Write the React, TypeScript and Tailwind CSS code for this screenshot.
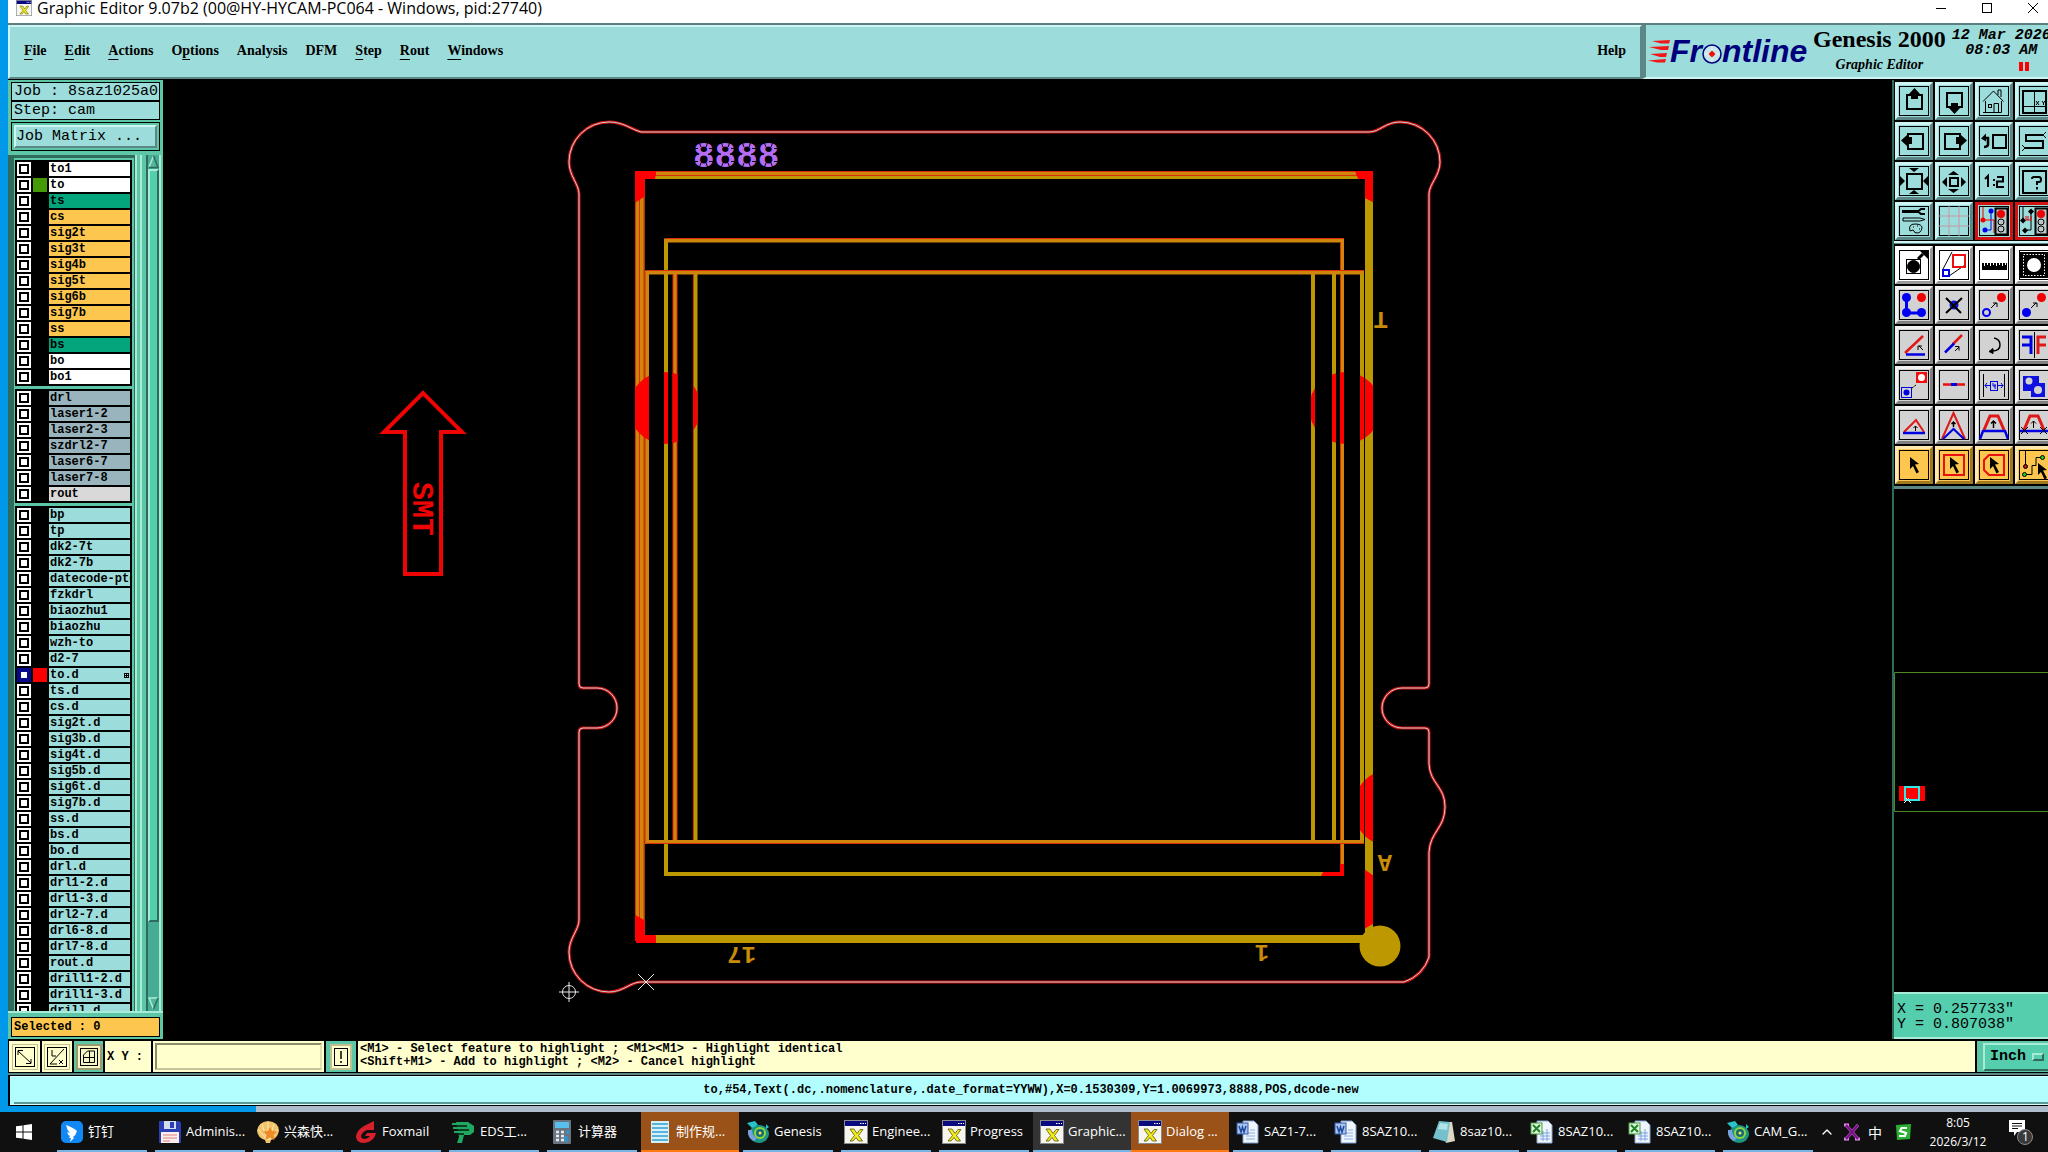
import { clsx } from "clsx";
import { ChevronUp } from "lucide-react";
import type { ReactNode } from "react";

const MENUS: { name: string; mark?: number }[] = [
  { name: "File", mark: 0 },
  { name: "Edit", mark: 0 },
  { name: "Actions", mark: 0 },
  { name: "Options", mark: 1 },
  { name: "Analysis" },
  { name: "DFM" },
  { name: "Step", mark: 0 },
  { name: "Rout", mark: 0 },
  { name: "Windows", mark: 0 },
];

type Layer = { name: string; color: string; swatch?: string; active?: boolean };

const paint = (color: string, names: string[]): Layer[] => names.map(name => ({ name, color }));

const LAYER_GROUPS: Layer[][] = [
  [
    { name: "to1", color: "bg-white" },
    { name: "to", color: "bg-white", swatch: "bg-[#459a08]" },
    { name: "ts", color: "bg-[#04a47c]" },
    ...paint("bg-[#fdc74f]", ["cs", "sig2t", "sig3t", "sig4b", "sig5t", "sig6b", "sig7b", "ss"]),
    { name: "bs", color: "bg-[#04a47c]" },
    ...paint("bg-white", ["bo", "bo1"]),
  ],
  [
    ...paint("bg-[#9ab4be]", ["drl", "laser1-2", "laser2-3", "szdrl2-7", "laser6-7", "laser7-8"]),
    { name: "rout", color: "bg-[#d9d9d9]" },
  ],
  [
    ...paint("bg-[#9cdcda]", [
      "bp",
      "tp",
      "dk2-7t",
      "dk2-7b",
      "datecode-ptd",
      "fzkdrl",
      "biaozhu1",
      "biaozhu",
      "wzh-to",
      "d2-7",
    ]),
    { name: "to.d", color: "bg-[#9cdcda]", swatch: "bg-[#ff0000]", active: true },
    ...paint("bg-[#9cdcda]", [
      "ts.d",
      "cs.d",
      "sig2t.d",
      "sig3b.d",
      "sig4t.d",
      "sig5b.d",
      "sig6t.d",
      "sig7b.d",
      "ss.d",
      "bs.d",
      "bo.d",
      "drl.d",
      "drl1-2.d",
      "drl1-3.d",
      "drl2-7.d",
      "drl6-8.d",
      "drl7-8.d",
      "rout.d",
      "drill1-2.d",
      "drill1-3.d",
      "drill.d",
    ]),
  ],
];

function XIcon({ className }: { className?: string }) {
  return (
    <svg viewBox="0 0 24 24" className={className} aria-hidden="true">
      <rect x="0.5" y="0.5" width="23" height="23" fill="#f6f6ee" stroke="#8a8a8a" />
      <rect x="1" y="1" width="22" height="5" fill="#0a0a80" />
      <path d="M16 3.500h1.500M18.500 3.500h1.500M21 3.500h1" stroke="#fff" strokeWidth="1.200" />
      <path d="M6 9h4l3 4.500 3-4h3l-4.500 6 4 5.500h-4l-2.500-3.500L9 21H6l4.500-5.500z" fill="#f4ec1a" stroke="#55550a" strokeWidth="0.800" />
    </svg>
  );
}

function TitleBar() {
  return (
    <header className="flex h-[23px] items-center bg-white pb-2 text-black">
      <XIcon className="ml-2 size-4" />
      <h1 className="ml-[5px] whitespace-nowrap font-['Open_Sans',sans-serif] text-[16px] leading-4">
        Graphic Editor 9.07b2 (00@HY-HYCAM-PC064 - Windows, pid:27740)
      </h1>
      <div className="ml-auto flex items-center gap-[34px] pr-[9px]">
        <button type="button" aria-label="Minimize">
          <svg viewBox="0 0 12 12" className="size-3" stroke="#000">
            <path d="M1 6.500h10" />
          </svg>
        </button>
        <button type="button" aria-label="Maximize">
          <svg viewBox="0 0 12 12" className="size-3" stroke="#000" fill="none">
            <rect x="1.500" y="1.500" width="9" height="9" />
          </svg>
        </button>
        <button type="button" aria-label="Close">
          <svg viewBox="0 0 12 12" className="size-3" stroke="#000">
            <path d="M1 1l10 10M11 1L1 11" />
          </svg>
        </button>
      </div>
    </header>
  );
}

function MenuName({ name, mark }: { name: string; mark?: number }) {
  if (mark === undefined) return <>{name}</>;
  return (
    <>
      {name.slice(0, mark)}
      <span className="underline underline-offset-4">{name[mark]}</span>
      {name.slice(mark + 1)}
    </>
  );
}

function FrontlineLogo() {
  return (
    <div className="flex items-center" aria-label="Frontline">
      <svg viewBox="0 0 22 26" className="h-[26px] w-[22px]" fill="#f01818" aria-hidden="true">
        <path d="M4 3l18-1-1 3.500H13zM1 9l20-1-1 4h-7zM2 16l17-1-1 4h-6zM0 22.500l18-1.500-1 3.500H9z" />
      </svg>
      <span className="flex items-center font-['Liberation_Sans',sans-serif] text-[32px] leading-8 font-bold text-[#00007c] italic">
        Fr
        <svg viewBox="0 0 20 20" className="mt-1.5 size-5" aria-hidden="true">
          <circle cx="10" cy="10" r="9" fill="#c4e8ea" stroke="#00007c" strokeWidth="1.500" />
          <path d="M10 3v14M3 10h14" stroke="#e8f4f4" />
          <path d="M10 6.500L13.500 10 10 13.500 6.500 10z" fill="#f01010" />
        </svg>
        ntline
      </span>
    </div>
  );
}

function MenuBar() {
  return (
    <div className="flex h-[57px] border-t-2 border-b border-t-[#5b7f7e] border-b-black bg-[#9cdcda] font-['Liberation_Serif',serif] text-black">
      <nav className="flex min-w-0 flex-1 items-center gap-[18px] border-2 border-t-[#cdf5f3] border-r-[#5b8886] border-b-[#5b8886] border-l-[#cdf5f3] px-3.5 pb-1 text-[14px] font-bold">
        {MENUS.map(menu => (
          <button key={menu.name} type="button">
            <MenuName {...menu} />
          </button>
        ))}
        <button type="button" className="ml-auto">
          Help
        </button>
      </nav>
      <div className="flex w-[406px] shrink-0 items-center overflow-hidden border-b-2 border-l-4 border-b-[#cdf5f3] border-l-[#5b8886] pl-0.5">
        <FrontlineLogo />
        <div className="ml-1 flex w-[136px] shrink-0 flex-col items-center">
          <div className="text-[24px] leading-7 font-bold whitespace-nowrap">Genesis 2000</div>
          <div className="text-[14px] leading-6 font-bold italic">Graphic Editor</div>
        </div>
        <div className="ml-1 w-[100px] shrink-0 text-center font-['Liberation_Mono',monospace] text-[15px] leading-[15px] font-bold whitespace-nowrap italic">
          12 Mar 2026
          <br />
          08:03 AM
          <svg viewBox="0 0 10 9" className="mt-1 mb-1 ml-[68px] h-[9px] w-2.5" fill="#ff0000" aria-hidden="true">
            <path d="M0 0h4v9H0zM6 0h4v9H6z" />
          </svg>
        </div>
      </div>
    </div>
  );
}

function LayerRow({ name, color, swatch, active }: Layer) {
  return (
    <li>
      <label className="flex h-[14px] gap-0.5">
        <input
          type="checkbox"
          defaultChecked={active}
          className={clsx(
            "size-[14px] shrink-0 appearance-none border-2",
            active ? "border-[#08088c] bg-white shadow-[inset_0_0_0_2px_#08088c]" : "border-white bg-white shadow-[inset_0_0_0_2px_#000]",
          )}
        />
        <span className={clsx("w-[14px] shrink-0", swatch)} />
        <span className={clsx("flex w-[81px] items-center overflow-hidden pl-px whitespace-nowrap", color)}>
          {name}
          {active && (
            <svg viewBox="0 0 5 5" className="mr-px ml-auto size-[5px] shrink-0" aria-hidden="true">
              <path d="M0 0h5v5H0zM1 1v1h1V1zM3 1v1h1V1zM1 3v1h1V3zM3 3v1h1V3z" fillRule="evenodd" />
            </svg>
          )}
        </span>
      </label>
    </li>
  );
}

function ScrollBar() {
  return (
    <div className="flex w-[15px] flex-col border-x-2 border-l-[#2f6b5c] border-r-[#a8ecd8] bg-[#48ac94]" aria-hidden="true">
      <svg viewBox="0 0 11 14" className="h-[14px] w-[11px] shrink-0">
        <path d="M5.500 1L1 12h9z" fill="#52b89c" />
        <path d="M5.500 1L1 12" stroke="#a8ecd8" strokeWidth="1.500" />
        <path d="M5.500 1L10 12.500H1" stroke="#2f6b5c" strokeWidth="1.500" fill="none" />
      </svg>
      <div className="flex-1 border-2 border-t-[#a8ecd8] border-r-[#2f6b5c] border-b-[#2f6b5c] border-l-[#a8ecd8] bg-[#55ceae]" />
      <div className="h-[75px]" />
      <svg viewBox="0 0 11 14" className="h-[14px] w-[11px] shrink-0">
        <path d="M1 1h9L5.500 12z" fill="#52b89c" />
        <path d="M10 1H1l4.500 11" stroke="#a8ecd8" strokeWidth="1.500" fill="none" />
        <path d="M10 1L5.500 12" stroke="#2f6b5c" strokeWidth="1.500" />
      </svg>
    </div>
  );
}

function LayerPanel() {
  return (
    <aside className="flex w-[155px] shrink-0 flex-col bg-[#5cc6a6] pt-0.5 pb-0.5 font-['Liberation_Mono',monospace] text-black">
      <div className="mx-[3px] h-[19px] overflow-hidden border border-black bg-[#9cdcda] pl-0.5 text-[15px] leading-[18px] whitespace-nowrap">
        Job : 8saz1025a0
      </div>
      <div className="mx-[3px] h-[19px] border border-black bg-[#9cdcda] pl-0.5 text-[15px] leading-[18px]">Step: cam</div>
      <div className="mx-[3px] mt-0.5 mb-1 border border-black p-0.5">
        <button
          type="button"
          className="block h-[23px] w-full border-2 border-t-[#cdf5f3] border-r-[#5b8886] border-b-[#5b8886] border-l-[#cdf5f3] bg-[#9cdcda] text-left text-[15px] leading-[18px]"
        >
          Job Matrix ...
        </button>
      </div>
      <div className="flex min-h-0 flex-1 border-b-2 border-b-[#a8ecd8]">
        <div className="min-h-0 overflow-hidden border-t-[3px] border-l-[6px] border-[#2f6b5c] pt-0.5 pr-0.5 pl-px">
          <div className="flex flex-col gap-[3px] text-[12px] leading-[14px] font-bold">
            {LAYER_GROUPS.map((group, index) => (
              <ul key={index} className="flex flex-col gap-0.5 bg-black p-0.5">
                {group.map(layer => (
                  <LayerRow key={layer.name} {...layer} />
                ))}
              </ul>
            ))}
          </div>
        </div>
        <div className="w-[3px] border-l border-[#2f6b5c] bg-[#a8ecd8]" />
        <div className="w-[3px]" />
        <div className="w-0.5 bg-[#a8ecd8]" />
        <div className="w-1" />
        <ScrollBar />
      </div>
      <div className="mx-[3px] mt-1 h-5 border border-black bg-[#fdc74f] pl-0.5 text-[12px] leading-[18px] font-bold">
        Selected : 0
      </div>
    </aside>
  );
}

/* Board outline, drawn once in red and once more as a thin pale core. */
const OUTLINE =
  "M641 132C630 129 624 122 609 122A40 40 0 0 0 569 162C569 176 579 184 579 194V684Q579 688 583 688H597A20 20 0 0 1 597 728H583Q579 728 579 732V920C579 930 569 938 569 952A40 40 0 0 0 609 992C624 992 630 982 641 982H1404A38 38 0 0 0 1429 957V852C1430 832 1445 828 1445 807C1445 786 1430 784 1429 764V732Q1429 728 1425 728H1402A20 20 0 0 1 1402 688H1425Q1429 688 1429 684V194C1429 184 1440 176 1440 162A40 40 0 0 0 1400 122C1385 122 1380 132 1369 132Z";

function Traces({ gold, orange, red }: { gold: string; orange: string; red: string }) {
  return (
    <g fill="none">
      <path d="M636 175H1373" stroke={gold} strokeWidth="8" />
      <path d="M636 173.500H1373" stroke={orange} strokeWidth="4" />
      <path d="M636 171.500H1373M636 175.500H1373" stroke={red} />
      <path d="M640 171V941" stroke={orange} strokeWidth="9" />
      <path d="M635.500 171V941M639.500 171V941M644 171V941" stroke={red} />
      <path d="M1369 171V941M636 939H1373" stroke={gold} strokeWidth="8" />
      <path d="M666 240V874H1342" stroke={gold} strokeWidth="4" />
      <path d="M664 240.500H1344M1342 240V876" stroke={orange} strokeWidth="4" />
      <path d="M666 238.500H1344M1340.500 242V864" stroke={red} />
      <path d="M1362 272V842M1334 272V842M1313 272V842M695.500 272V842" stroke={gold} strokeWidth="4" />
      <path d="M647 842V272.500H1364M675 272V842M645 842H1364" stroke={orange} strokeWidth="4" />
      <path d="M645 272V843M673 274V840M677 274V840M693.500 274V840M646 270.500H1364M646 843.500H1364" stroke={red} />
    </g>
  );
}

function BoardCanvas() {
  return (
    <main className="min-w-0 flex-1 bg-black">
      <svg viewBox="163 80 1729 959" className="block h-full w-full" role="img" aria-label="Board step view">
        <defs>
          <clipPath id="highlight">
            <circle cx="665" cy="408" r="36" />
            <circle cx="1345" cy="408" r="36" />
            <circle cx="1392" cy="808" r="39" />
            <path d="M630 165H657L655 180L644 197L630 206ZM1353 165H1380V206L1365 198ZM630 912L644 920L656 936V950H630ZM1364 869L1380 880V920L1364 929ZM1324 870L1338 864H1350V880H1319Z" />
          </clipPath>
        </defs>
        <path d={OUTLINE} fill="none" stroke="#cc1010" strokeWidth="3" />
        <path d={OUTLINE} fill="none" stroke="#c8d0d0" />
        <Traces gold="#bd9800" orange="#d0850c" red="#d83008" />
        <g clipPath="url(#highlight)">
          <Traces gold="#ff0000" orange="#ff0000" red="#ff0000" />
        </g>
        <circle cx="1380" cy="946" r="20.500" fill="#bd9800" />

        <text x="693" y="167" className="font-['Liberation_Mono',monospace] text-[36px] font-bold" fill="#b46cf5">
          8888
        </text>
        <path
          d="M692 148.500h6M709 148.500h7M731 148.500h6M752 148.500h7M774 148.500h6M692 154.500h7M708 154.500h13M730 154.500h12M751 154.500h13M773 154.500h7M692 161.500h6M709 161.500h7M731 161.500h6M752 161.500h7M774 161.500h6M699 142l2 5M708 142l-2 5M721 142l2 5M730 142l-2 5M742 142l2 5M751 142l-2 5M764 142l2 5M773 142l-2 5M699 168l2-5M708 168l-2-5M721 168l2-5M730 168l-2-5M742 168l2-5M751 168l-2-5M764 168l2-5M773 168l-2-5"
          stroke="#000"
        />

        <g className="font-['Liberation_Mono',monospace] text-[24px] font-bold" fill="#c88c08">
          <text transform="translate(1388 312) rotate(180)">T</text>
          <text transform="translate(1392 855) rotate(180)">A</text>
          <text transform="translate(1269 945) rotate(180)">1</text>
          <text transform="translate(756 947) rotate(180)">17</text>
        </g>

        <path d="M423 393L384 432H405V574H441V432H462Z" fill="none" stroke="#ee0404" strokeWidth="4" />
        <text
          transform="translate(413 482) rotate(90)"
          className="font-['Liberation_Mono',monospace] text-[30px] font-bold"
          textAnchor="start"
          fill="#ee0404"
        >
          SMT
        </text>

        <g fill="none" stroke="#e8e8e8">
          <circle cx="569" cy="992" r="6.500" />
          <path d="M559 992h20M569 982v20M638 974l16 16M654 974l-16 16" />
        </g>
      </svg>
    </main>
  );
}

const TONES = {
  teal: "bg-[#9cdcda] border-t-[#cdf5f3] border-l-[#cdf5f3] border-r-[#5b8886] border-b-[#5b8886]",
  red: "bg-[#9cdcda] border-[#d01414]",
  white: "bg-white border-t-white border-l-white border-r-[#999999] border-b-[#999999]",
  gray: "bg-[#d2d2d2] border-t-[#f2f2f2] border-l-[#f2f2f2] border-r-[#808080] border-b-[#808080]",
  amber: "bg-[#fdc74f] border-t-[#ffe8b0] border-l-[#ffe8b0] border-r-[#a07820] border-b-[#a07820]",
};

type Tool = { label: string; tone: keyof typeof TONES; icon: ReactNode };

const cursor = <path d="M0 0l9 7-4 .500 4 7.500-2.500 1.500-3.500-7.500-3 3z" fill="#000" stroke="none" />;

const VIEW_TOOLS: Tool[] = [
  {
    label: "Pan up",
    tone: "teal",
    icon: (
      <>
        <rect x="12" y="13" width="15" height="14" strokeWidth="2" />
        <path d="M19.500 6l5.500 6h-2v5h-7v-5h-2z" fill="#000" stroke="none" />
      </>
    ),
  },
  {
    label: "Pan down",
    tone: "teal",
    icon: (
      <>
        <rect x="12" y="11" width="15" height="14" strokeWidth="2" />
        <path d="M19.500 32l5.500-6h-2v-5h-7v5h-2z" fill="#000" stroke="none" />
      </>
    ),
  },
  {
    label: "Home",
    tone: "teal",
    icon: (
      <>
        <path d="M8 19.500L18.500 9 28.500 19.500M10.500 19V30.500H26.500V19M19 30V21.500H23.500V30M8 30.500h4M23 13V8h3v7" />
        <rect x="13.500" y="22.500" width="3" height="3" />
      </>
    ),
  },
  {
    label: "View XY",
    tone: "teal",
    icon: (
      <>
        <rect x="8" y="9" width="23" height="22" strokeWidth="2" />
        <path d="M19.500 9V31M8 24.500H31M21 19l3 4M24 19l-3 4M27 19l1.500 2 1.500-2M28.500 21v2" />
      </>
    ),
  },
  {
    label: "Pan left",
    tone: "teal",
    icon: (
      <>
        <rect x="13" y="12" width="15" height="15" strokeWidth="2" />
        <path d="M6 18.500l6-5.500v2h5v7h-5v2z" fill="#000" stroke="none" />
      </>
    ),
  },
  {
    label: "Pan right",
    tone: "teal",
    icon: (
      <>
        <rect x="10" y="12" width="15" height="15" strokeWidth="2" />
        <path d="M32 18.500l-6-5.500v2h-5v7h5v2z" fill="#000" stroke="none" />
      </>
    ),
  },
  {
    label: "Previous view",
    tone: "teal",
    icon: (
      <>
        <rect x="18" y="13" width="13" height="13" strokeWidth="2" />
        <path d="M9 16h4v7q-1 2-4 2" strokeWidth="2.500" />
        <path d="M6 16.500l5-5v8z" fill="#000" stroke="none" />
      </>
    ),
  },
  {
    label: "Serpentine",
    tone: "teal",
    icon: (
      <>
        <path d="M28 13H11v6H28v7H10" strokeWidth="2" />
        <path d="M31 10l-3 3 3 3M7 23l3 3-3 3" />
      </>
    ),
  },
  {
    label: "Zoom out",
    tone: "teal",
    icon: (
      <>
        <rect x="12" y="12" width="15" height="15" strokeWidth="2" />
        <path d="M14 6h10l-5 4zM14 32h10l-5-4zM5 14v10l5-5zM33 14v10l-5-5z" fill="#000" stroke="none" />
      </>
    ),
  },
  {
    label: "Zoom in",
    tone: "teal",
    icon: (
      <>
        <rect x="15" y="16" width="8" height="8" strokeWidth="2" />
        <path d="M13 13h11l-5.500-4zM13 27h11l-5.500 4zM12 15v10l-5-5zM26 15v10l5-5z" fill="#000" stroke="none" />
      </>
    ),
  },
  {
    label: "Scale 1:2",
    tone: "teal",
    icon: <path d="M10 17l3-3v11M19 17v2M19 22v2M22 15h6v4.500h-6V25h7" strokeWidth="2" />,
  },
  {
    label: "Query",
    tone: "teal",
    icon: (
      <>
        <rect x="8" y="9" width="23" height="22" strokeWidth="2" />
        <path d="M17 17q0-2 2-2h5q2 0 2 2.500t-2 2.500h-2v3M22 25v2.500" strokeWidth="2" />
      </>
    ),
  },
  {
    label: "Settings",
    tone: "teal",
    icon: (
      <>
        <path d="M7 9.500H24" strokeWidth="3" />
        <path d="M30 7h-4l-3 2.500 3 2.500h4" strokeWidth="2" />
        <path d="M8 16h17l5 1.500-5 1.500H8zM15 29q-2-7 5-7t7 4q-1 5-5 5-3 0-3-2t-4 0z" />
        <path d="M18 25h1M22 24h1M24 27h1" />
      </>
    ),
  },
  {
    label: "Grid",
    tone: "teal",
    icon: <path d="M14 4V34M24 4V34M4 14H34M4 24H34" stroke="#c49aa8" />,
  },
  {
    label: "Net highlight",
    tone: "red",
    icon: (
      <>
        <path d="M16 9v19h-5" stroke="#0000e8" />
        <path d="M8 5v13h11v13" stroke="#e80000" />
        <rect x="20.500" y="6.500" width="12" height="26" fill="#b8c8c8" strokeWidth="2" />
        <circle cx="26" cy="12" r="4" fill="#f00000" stroke="none" />
        <circle cx="26" cy="20" r="3" />
        <circle cx="26" cy="27" r="3" />
        <circle cx="8" cy="18" r="2.500" fill="#f00000" stroke="none" />
        <circle cx="16" cy="9" r="2.500" fill="#0000f0" stroke="none" />
        <circle cx="10" cy="28" r="2.500" fill="#0000f0" stroke="none" />
      </>
    ),
  },
  {
    label: "Net compare",
    tone: "red",
    icon: (
      <>
        <path d="M16 9v19h-6M8 5v13" />
        <path d="M11 18h5M11 14v4M13 14v4M16 14v4" stroke="#e80000" />
        <rect x="20.500" y="6.500" width="12" height="26" fill="#b8c8c8" strokeWidth="2" />
        <circle cx="26" cy="12" r="4" fill="#f00000" stroke="none" />
        <circle cx="26" cy="20" r="3" />
        <circle cx="26" cy="27" r="3" />
        <path d="M8 15.500l3 3-3 3-3-3zM16 6.500l3 3-3 3-3-3zM10 25.500l3 3-3 3-3-3z" fill="#000" stroke="none" />
      </>
    ),
  },
];

const EDIT_TOOLS: Tool[] = [
  {
    label: "Move feature",
    tone: "white",
    icon: (
      <>
        <rect x="11.500" y="13.500" width="14" height="14" />
        <circle cx="18.500" cy="20.500" r="6" fill="#000" />
        <path d="M23 13l5-5" strokeWidth="3" />
        <path d="M25 5h8v8z" fill="#000" stroke="none" />
      </>
    ),
  },
  {
    label: "Resize",
    tone: "white",
    icon: (
      <>
        <path d="M8 23l9-17M14 30l16-11" />
        <rect x="18" y="9" width="12" height="12" stroke="#e81010" strokeWidth="2" />
        <rect x="8" y="24" width="6" height="6" stroke="#0000e0" strokeWidth="2" />
      </>
    ),
  },
  {
    label: "Ruler",
    tone: "white",
    icon: (
      <>
        <path d="M7 17h25v7H7z" fill="#000" stroke="none" />
        <path d="M9.500 16v4M12.500 16v3M15.500 16v4M18.500 16v3M21.500 16v4M24.500 16v3M27.500 16v4M30.500 16v3" stroke="#fff" />
      </>
    ),
  },
  {
    label: "Invert",
    tone: "white",
    icon: (
      <>
        <rect x="5" y="6" width="28" height="26" fill="#000" stroke="none" />
        <rect x="8.500" y="8.500" width="21" height="21" stroke="#fff" strokeDasharray="1.500 1.500" />
        <circle cx="19" cy="19" r="7" fill="#fff" stroke="none" />
      </>
    ),
  },
  {
    label: "Chain",
    tone: "gray",
    icon: (
      <>
        <path d="M11.500 12v15h15" stroke="#0000f0" strokeWidth="3" />
        <g fill="#0000f0" stroke="none">
          <circle cx="11.500" cy="11.500" r="4.500" />
          <circle cx="11.500" cy="26.500" r="4.500" />
          <circle cx="26.500" cy="26.500" r="4.500" />
        </g>
        <circle cx="26.500" cy="11.500" r="4.500" fill="#f00000" stroke="none" />
      </>
    ),
  },
  {
    label: "Delete",
    tone: "gray",
    icon: (
      <>
        <circle cx="19" cy="19" r="4.500" fill="#1010d0" stroke="none" />
        <path d="M11 12l15 15M27 12L11 27" strokeWidth="2" />
      </>
    ),
  },
  {
    label: "Copy point",
    tone: "gray",
    icon: (
      <>
        <circle cx="26.500" cy="11.500" r="4.500" fill="#f00000" stroke="none" />
        <circle cx="11.500" cy="26.500" r="3.500" stroke="#0000f0" strokeWidth="2" />
        <path d="M16 22l5-5M18 17h4v4" />
      </>
    ),
  },
  {
    label: "Move point",
    tone: "gray",
    icon: (
      <>
        <circle cx="26.500" cy="11.500" r="4.500" fill="#f00000" stroke="none" />
        <circle cx="11.500" cy="26.500" r="4.500" fill="#0000f0" stroke="none" />
        <path d="M16 22l5-5M18 17h4v4" />
      </>
    ),
  },
  {
    label: "Rotate line",
    tone: "gray",
    icon: (
      <>
        <path d="M10 27L28 10" stroke="#e01818" strokeWidth="2.500" />
        <path d="M11 28.500H30" stroke="#0000e0" strokeWidth="2.500" />
        <path d="M28 24l-4-4M27 20h-4v4" />
      </>
    ),
  },
  {
    label: "Stretch line",
    tone: "gray",
    icon: (
      <>
        <path d="M18 18l9-9" stroke="#e01818" strokeWidth="2.500" />
        <path d="M10 26.500l9-9" stroke="#0000e0" strokeWidth="2.500" />
        <path d="M20 25l4-4M20 20.500h4v4" />
      </>
    ),
  },
  {
    label: "Rotate",
    tone: "gray",
    icon: (
      <>
        <path d="M19 12q6 1 6 7t-8 6" strokeWidth="1.500" />
        <path d="M14 25.500l4-3v5z" fill="#000" />
      </>
    ),
  },
  {
    label: "Mirror",
    tone: "gray",
    icon: (
      <>
        <path d="M7 11h9v17M7 19h9" stroke="#0000e0" strokeWidth="3" />
        <path d="M31 11h-8v17M31 19h-8" stroke="#e01818" strokeWidth="3" />
        <path d="M19.500 6v26" />
      </>
    ),
  },
  {
    label: "Copy",
    tone: "gray",
    icon: (
      <>
        <rect x="21" y="6" width="11" height="11" fill="#f01010" stroke="none" />
        <circle cx="26.500" cy="11.500" r="3.500" fill="#fff" stroke="none" />
        <rect x="6.500" y="21.500" width="10" height="10" stroke="#0000e0" />
        <circle cx="11.500" cy="26.500" r="3" fill="#0000e0" stroke="none" />
        <path d="M17 22l4-3" strokeDasharray="2 1" />
      </>
    ),
  },
  {
    label: "Break line",
    tone: "gray",
    icon: (
      <>
        <path d="M8 18.500H30" stroke="#e81010" strokeWidth="2.500" />
        <path d="M16 18.500h6" stroke="#0000e0" strokeWidth="3" />
      </>
    ),
  },
  {
    label: "Spacing",
    tone: "gray",
    icon: (
      <>
        <path d="M8.500 8v23M29.500 8v23" />
        <path d="M10 19.500h5M23 19.500h5M12 17l-2 2.500 2 2.500M26 17l2 2.500-2 2.500" stroke="#0000e0" />
        <rect x="15.500" y="15.500" width="7" height="9" stroke="#0000e0" />
        <path d="M18 17v3h3M20 18v5" stroke="#0000e0" />
      </>
    ),
  },
  {
    label: "Merge",
    tone: "gray",
    icon: (
      <>
        <path d="M8 10h16v7h6v14H16v-6H8z" fill="#1010e0" stroke="none" />
        <circle cx="14" cy="15" r="3.500" fill="#d2d2d2" stroke="none" />
        <circle cx="23" cy="24" r="4" fill="#d2d2d2" stroke="none" />
      </>
    ),
  },
  {
    label: "Corner",
    tone: "gray",
    icon: (
      <>
        <path d="M9 26L21 14l8 12" stroke="#e01818" strokeWidth="2" />
        <path d="M8 27H30" stroke="#0000e0" strokeWidth="2.500" />
        <path d="M20.500 25v-5M18.500 22l2-2 2 2" />
      </>
    ),
  },
  {
    label: "Peak",
    tone: "gray",
    icon: (
      <>
        <path d="M7 33L18.500 7 30 33" stroke="#e01818" strokeWidth="2" />
        <path d="M8 33l10.500-10L29 33" stroke="#0000e0" strokeWidth="2" />
        <path d="M18.500 21v-5M16.500 18l2-2 2 2" strokeWidth="1.500" />
      </>
    ),
  },
  {
    label: "Plateau",
    tone: "gray",
    icon: (
      <>
        <path d="M9 24l6-14h8l6 14" stroke="#e01818" strokeWidth="3" />
        <path d="M5 33l3-8H30l3 8" stroke="#0000e0" strokeWidth="2.500" />
        <path d="M18.500 22v-7M16 17.500l2.500-2.500 2.500 2.500" strokeWidth="1.500" />
      </>
    ),
  },
  {
    label: "Trim plateau",
    tone: "gray",
    icon: (
      <>
        <path d="M9 24l6-14h8l6 14" stroke="#e01818" strokeWidth="3" />
        <path d="M5 25H33" stroke="#0000e0" strokeWidth="2.500" />
        <path d="M18.500 22v-7M16 17.500l2.500-2.500 2.500 2.500M6 21l7 7M13 21l-7 7M25 21l7 7M32 21l-7 7" />
      </>
    ),
  },
  { label: "Select", tone: "amber", icon: <g transform="translate(15 11)">{cursor}</g> },
  {
    label: "Select in rectangle",
    tone: "amber",
    icon: (
      <>
        <rect x="9" y="9" width="20" height="20" stroke="#e81010" strokeWidth="2" />
        <g transform="translate(15 11)">{cursor}</g>
      </>
    ),
  },
  {
    label: "Select in polygon",
    tone: "amber",
    icon: (
      <>
        <path d="M14 9H29V29H14l-5-5V14z" stroke="#e81010" strokeWidth="2" />
        <g transform="translate(15 11)">{cursor}</g>
      </>
    ),
  },
  {
    label: "Select net",
    tone: "amber",
    icon: (
      <>
        <path d="M10.500 5v15M10 28.500h7v-9h4v-8h6" />
        <circle cx="10.500" cy="20.500" r="2" fill="#c01010" />
        <circle cx="9.500" cy="28.500" r="2" fill="#20d020" />
        <circle cx="27.500" cy="11.500" r="2" fill="#20d020" />
        <g transform="translate(23 17)">{cursor}</g>
      </>
    ),
  },
];

function ToolGrid({ tools }: { tools: Tool[] }) {
  return (
    <div className="grid grid-cols-[repeat(4,38px)] gap-0.5 bg-black pt-0.5 pl-px">
      {tools.map(({ label, tone, icon }) => (
        <button key={label} type="button" aria-label={label} className={clsx("size-[38px] border-[3px]", TONES[tone])}>
          <svg viewBox="3 3 32 32" className="size-8" fill="none" stroke="#000">
            <rect x="4.500" y="4.500" width="29" height="29" />
            {icon}
          </svg>
        </button>
      ))}
    </div>
  );
}

function ToolPanel() {
  return (
    <aside className="flex w-[156px] shrink-0 flex-col overflow-hidden border-l-2 border-[#2f6b5c] bg-black">
      <ToolGrid tools={VIEW_TOOLS} />
      <div className="mt-px h-[3px] shrink-0 border-t-2 border-[#cdf5f3] bg-[#5b8886]" />
      <ToolGrid tools={EDIT_TOOLS} />
      <div className="mt-0.5 h-[3px] shrink-0 bg-[#5b8886]" />
      <svg viewBox="0 0 154 504" preserveAspectRatio="xMinYMin slice" className="min-h-0 w-full flex-1" fill="none" aria-hidden="true">
        <path d="M160 183.500H0.500V322.500H160" stroke="#4a8a20" />
        <rect x="5" y="297" width="26" height="15" fill="#ff0000" />
        <rect x="11" y="298" width="14" height="13" stroke="#30e8e8" strokeWidth="2" />
        <path d="M10 314l5-5M17 314l-5-5" stroke="#fff" />
      </svg>
      <div className="h-[47px] shrink-0 border-y-2 border-[#a8ecd8] bg-[#55ceae] pt-2 pl-[3px] font-['Liberation_Mono',monospace] text-[15px] leading-[15px] whitespace-pre text-black">
        {'X = 0.257733"\nY = 0.807038"'}
      </div>
    </aside>
  );
}

function CommandBar() {
  return (
    <div className="flex h-[33px] gap-0.5 border-t border-b border-black bg-black pl-px font-['Liberation_Mono',monospace] text-[12px] font-bold text-black">
      <button type="button" aria-label="Line mode" className="flex w-[31px] items-center justify-center bg-[#ffffce]">
        <svg viewBox="0 0 26 26" className="size-[26px]" fill="none" stroke="#000">
          <rect x="0.500" y="0.500" width="25" height="25" stroke="#c0c090" />
          <rect x="3.500" y="3.500" width="19" height="19" />
          <path d="M6 7l13 12M6 11V6.500h5M19 15v4.500h-5" />
        </svg>
      </button>
      <button type="button" aria-label="Angle mode" className="flex w-[30px] items-center justify-center bg-[#ffffce]">
        <svg viewBox="0 0 26 26" className="size-[26px]" fill="none" stroke="#000">
          <rect x="0.500" y="0.500" width="25" height="25" stroke="#c0c090" />
          <rect x="3.500" y="3.500" width="19" height="19" />
          <path d="M20 5L6 20h7M8 6v6h4M15 16l4 4M19 16l-4 4" />
        </svg>
      </button>
      <button type="button" aria-label="Grid mode" className="flex w-[29px] items-center justify-center bg-[#5cc6a6]">
        <svg viewBox="0 0 26 26" className="size-[26px]" fill="none" stroke="#000">
          <rect x="1" y="1" width="24" height="24" fill="#f4f4c4" stroke="#9a9a70" strokeWidth="2" />
          <rect x="4.500" y="4.500" width="17" height="17" />
          <path d="M7.500 18.500V11l4-4h7v11.500zM7 13.500h12M13.500 7v12" />
        </svg>
      </button>
      <label htmlFor="xy" className="flex w-[46px] items-center bg-[#ffffce] pl-0.5 whitespace-nowrap">
        X Y :
      </label>
      <div className="w-[171px] bg-[#ffffce] p-0.5">
        <input
          id="xy"
          type="text"
          className="block h-full w-full border-2 border-t-[#8c8c6c] border-r-[#e0e0b0] border-b-[#c4c49c] border-l-[#8c8c6c] bg-[#ffffce] px-1 outline-none"
        />
      </div>
      <button type="button" aria-label="Alert" className="flex w-[30px] items-center justify-center bg-[#5cc6a6]">
        <svg viewBox="0 0 22 26" className="h-[26px] w-[22px]" fill="none" stroke="#000">
          <rect x="1" y="1" width="20" height="24" fill="#ffffce" stroke="#c0c090" strokeWidth="2" />
          <rect x="4.500" y="4.500" width="13" height="17" />
          <path d="M11 7v8M11 17v2" strokeWidth="1.500" />
        </svg>
      </button>
      <p className="min-w-0 flex-1 bg-[#ffffce] pt-0.5 pl-0.5 leading-[13px] whitespace-pre">
        {"<M1> - Select feature to highlight ; <M1><M1> - Highlight identical\n<Shift+M1> - Add to highlight ; <M2> - Cancel highlight"}
      </p>
      <div className="relative w-[71px] shrink-0 overflow-hidden bg-[#5cc6a6]">
        <label htmlFor="units" className="sr-only">
          Units
        </label>
        <select
          id="units"
          className="mt-0.5 ml-1.5 block h-7 w-20 appearance-none border-2 border-t-[#a8ecd8] border-r-[#2f6b5c] border-b-[#2f6b5c] border-l-[#a8ecd8] bg-[#55ceae] pl-[5px] text-[15px] outline-none"
        >
          <option>Inch</option>
          <option>MM</option>
        </select>
        <span className="pointer-events-none absolute top-3 right-1 h-2 w-3 border-2 border-t-[#a8ecd8] border-r-[#2f6b5c] border-b-[#2f6b5c] border-l-[#a8ecd8]" />
      </div>
    </div>
  );
}

function StatusBar() {
  return (
    <div className="h-[33px] border-t-2 border-[#5b8886] bg-black py-px pl-0.5">
      <div className="flex h-full flex-col border-y border-[#d4ffff] bg-[#b2fefe] py-0.5 pl-1">
        <p className="flex-1 border-b-2 border-[#5b9896] text-center font-['Liberation_Mono',monospace] text-[12px] leading-[23px] font-bold whitespace-nowrap text-black">
          to,#54,Text(.dc,.nomenclature,.date_format=YYWW),X=0.1530309,Y=1.0069973,8888,POS,dcode-new
        </p>
      </div>
    </div>
  );
}

const ICONS: Record<string, ReactNode> = {
  ding: (
    <>
      <rect x="1" y="1" width="22" height="22" rx="5" fill="#1288f4" />
      <path d="M6 5q8 3 11 6-1 4-4 6l1 1-4 4 1-4H9l1-2q-2-1-3-4l3 1q-3-3-4-8z" fill="#fff" />
    </>
  ),
  floppy: (
    <>
      <path d="M1 1h20l2 2v20H1z" fill="#2a3fb4" />
      <rect x="6" y="1" width="12" height="8" fill="#d4dcf0" />
      <rect x="12" y="2" width="4" height="6" fill="#2a3fb4" />
      <rect x="3" y="12" width="18" height="11" fill="#fdeeee" />
      <path d="M5 15h14M5 18h14M5 21h7" stroke="#e08080" />
    </>
  ),
  shell: (
    <>
      <path d="M12 1q11 1 11 10-2 8-8 9l-1 3h-4l-1-3Q2 18 1 11 2 2 12 1z" fill="#f2c46a" />
      <path d="M12 2v18M6 4l5 16M18 4l-5 16M2 9l9 11M22 9l-9 11" stroke="#fce8b4" />
      <path d="M14 7l2 4 5 .500-3.500 3.500 1 5-4.500-2.500L9.500 20l1-5L7 11.500l5-.500z" fill="#ee8a28" />
    </>
  ),
  foxmail: <path d="M20 1L10 6Q2 11 2 17q1 6 8 6 10-1 12-10h-9l-2 3h5q-2 3-5 3-4 0-4-3 1-4 6-6h7z" fill="#d8202c" />,
  eds: (
    <>
      <path d="M4 2h12l6 4v6l-4 3h-6l-2 8H5l2-6" fill="#1fa860" />
      <path d="M1 6h14M4 10h13M3 14h9" stroke="#0c1a12" strokeWidth="1.500" />
      <path d="M0 4h6M1 8h5M2 12h5" stroke="#1fa860" strokeWidth="2" />
    </>
  ),
  calc: (
    <>
      <rect x="3" y="0" width="18" height="24" rx="1" fill="#6a7480" />
      <rect x="5" y="2" width="14" height="6" fill="#58c0ec" />
      <path d="M6 12h3M11 12h3M6 16h3M11 16h3M6 20h3M11 20h3" stroke="#e8ecf0" strokeWidth="2.500" />
      <path d="M16 12h3M16 16v6" stroke="#2898d8" strokeWidth="3" />
    </>
  ),
  note: (
    <>
      <rect x="3" y="1" width="18" height="22" fill="#d8f0fa" />
      <path d="M4 4h16M4 8h16M4 12h16M4 16h16M4 20h16" stroke="#58b4dc" strokeWidth="2" />
    </>
  ),
  genesis: (
    <>
      <ellipse cx="13" cy="14" rx="10" ry="9" fill="#1e9484" />
      <path d="M1 3l8-2 3 4-6 3zM20 4l3 3-3 2z" fill="#28c4c8" />
      <circle cx="14" cy="13" r="6" fill="#88d83c" />
      <circle cx="14" cy="13" r="4" fill="#186878" />
      <circle cx="14" cy="13" r="1.500" fill="#f0e848" />
      <path d="M2 10q-1 8 6 11l3-3q-5-2-5-8z" fill="#7aa0e0" />
    </>
  ),
  word: (
    <>
      <path d="M7 1h11l4 4v18H7z" fill="#f0f5fc" stroke="#7a9ccc" />
      <path d="M10 13h9M10 16h9M10 19h9M14 10h5" stroke="#8ab0e0" />
      <rect x="1" y="3" width="11" height="11" fill="#a8c4ec" stroke="#3058a8" />
      <path d="M3 6l2 6 1.500-5L8 12l2-6" stroke="#2048a0" strokeWidth="1.500" fill="none" />
    </>
  ),
  pad: (
    <>
      <path d="M8 2h12l3 19-9 2z" fill="#dcd8c4" />
      <path d="M7 1l11 1-3 20L1 18z" fill="#74c0cc" />
      <path d="M8 3l8 1-1 6L6 9z" fill="#b0e4e8" />
    </>
  ),
  excel: (
    <>
      <path d="M7 1h11l4 4v18H7z" fill="#f0f5fc" stroke="#8aa4cc" />
      <path d="M10 13h10M10 16h10M10 19h10M13 11v10M17 9v12" stroke="#7aa4e0" />
      <rect x="1" y="3" width="11" height="11" fill="#e0f4dc" stroke="#48a040" />
      <path d="M3 5l7 7M10 5l-7 7" stroke="#1e8428" strokeWidth="2" />
    </>
  ),
};

const TASKS: { icon: string; title: string; state?: "alert" | "current" }[] = [
  { icon: "ding", title: "钉钉" },
  { icon: "floppy", title: "Adminis..." },
  { icon: "shell", title: "兴森快..." },
  { icon: "foxmail", title: "Foxmail" },
  { icon: "eds", title: "EDS工..." },
  { icon: "calc", title: "计算器" },
  { icon: "note", title: "制作规...", state: "alert" },
  { icon: "genesis", title: "Genesis" },
  { icon: "x", title: "Enginee..." },
  { icon: "x", title: "Progress" },
  { icon: "x", title: "Graphic...", state: "current" },
  { icon: "x", title: "Dialog ...", state: "alert" },
  { icon: "word", title: "SAZ1-7..." },
  { icon: "word", title: "8SAZ10..." },
  { icon: "pad", title: "8saz10..." },
  { icon: "excel", title: "8SAZ10..." },
  { icon: "excel", title: "8SAZ10..." },
  { icon: "genesis", title: "CAM_G..." },
];

function Taskbar() {
  return (
    <footer className="flex h-10 items-center bg-[#101010] font-['Open_Sans','Noto_Sans_CJK_SC',sans-serif] text-[13px] text-white">
      <button type="button" aria-label="Start" className="flex w-[53px] shrink-0 pl-4">
        <svg viewBox="0 0 16 16" className="size-4" fill="#fff">
          <path d="M0 2.300L6.500 1.400V7.500H0zM7.500 1.200L16 0V7.500H7.500zM0 8.500H6.500V14.600L0 13.700zM7.500 8.500H16V16L7.500 14.800z" />
        </svg>
      </button>
      {TASKS.map(({ icon, title, state }, index) => (
        <button
          key={index}
          type="button"
          className={clsx(
            "flex h-full w-[98px] shrink-0 flex-col whitespace-nowrap",
            state === "alert" && "bg-[#9a5218]",
            state === "current" && "bg-[#333333]",
          )}
        >
          <span className="flex min-h-0 flex-1 items-center gap-1 pt-0.5 pl-[7px]">
            {icon === "x" ? (
              <XIcon className="size-6" />
            ) : (
              <svg viewBox="0 0 24 24" className="size-6" fill="none" aria-hidden="true">
                {ICONS[icon]}
              </svg>
            )}
            {title}
          </span>
          <span
            className={clsx(
              "h-0.5 shrink-0 self-stretch",
              !state && "mx-1",
              state === "alert" ? "bg-[#ff7a10]" : "bg-[#76b4e6]",
            )}
          />
        </button>
      ))}
      <div className="ml-auto flex items-center pr-3.5">
        <button type="button" aria-label="Show hidden icons">
          <ChevronUp className="size-4" />
        </button>
        <svg viewBox="0 0 18 18" className="ml-2 size-[18px]" aria-hidden="true">
          <path d="M3 2l12 14M15 2L3 16M1 2h5M1 16h5M12 16h5" stroke="#e088e8" strokeWidth="3" />
          <path d="M3 2l12 14M15 2L3 16" stroke="#7a1088" strokeWidth="2.500" />
        </svg>
        <span className="ml-[7px] text-[14px]">中</span>
        <svg viewBox="0 0 18 18" className="ml-3 size-[18px]" aria-hidden="true">
          <path d="M2 2l15-1-1 15-13 1z" fill="#28b030" />
          <path d="M13 5H7.500L6 8l6 2-1 3H5" stroke="#fff" strokeWidth="2.200" fill="none" />
        </svg>
        <div className="ml-2 w-[76px] text-center text-[12px] leading-[19px]">
          8:05
          <br />
          2026/3/12
        </div>
        <button type="button" aria-label="Notifications" className="ml-3 flex">
          <svg viewBox="0 0 26 26" className="size-[26px]">
            <path d="M1 1h16v12h-8l-3 4v-4H1z" fill="#fff" />
            <path d="M4 4.500h10M4 7h10M4 9.500h6" stroke="#101010" />
            <circle cx="17" cy="18" r="7.500" fill="#3a3a3a" stroke="#888" />
            <text x="14" y="22" fill="#fff" className="text-[12px]">
              1
            </text>
          </svg>
        </button>
      </div>
    </footer>
  );
}

export default function App() {
  return (
    <div className="flex h-screen flex-col overflow-hidden bg-[#0098e8]">
      <div className="ml-2 flex min-h-0 flex-1 flex-col">
        <TitleBar />
        <MenuBar />
        <div className="flex min-h-0 flex-1 bg-black pb-px">
          <LayerPanel />
          <BoardCanvas />
          <ToolPanel />
        </div>
        <CommandBar />
        <StatusBar />
      </div>
      <div className="ml-64 h-1.5 shrink-0 bg-[#aebccb]" />
      <Taskbar />
    </div>
  );
}
